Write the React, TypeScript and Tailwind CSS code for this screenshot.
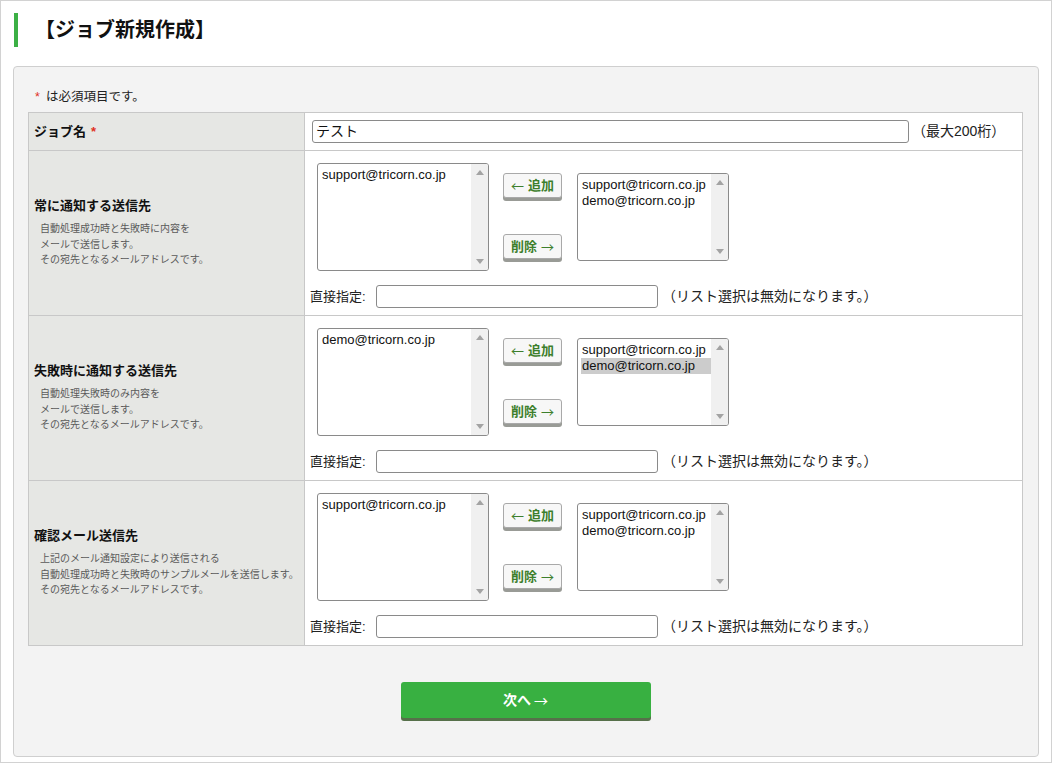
import React from 'react';

type Row = {
  title: string;
  desc: string[];
  left: string[];
  right: string[];
  selected?: number;
};

const ROWS: Row[] = [
  {
    title: '常に通知する送信先',
    desc: ['自動処理成功時と失敗時に内容を', 'メールで送信します。', 'その宛先となるメールアドレスです。'],
    left: ['support@tricorn.co.jp'],
    right: ['support@tricorn.co.jp', 'demo@tricorn.co.jp'],
  },
  {
    title: '失敗時に通知する送信先',
    desc: ['自動処理失敗時のみ内容を', 'メールで送信します。', 'その宛先となるメールアドレスです。'],
    left: ['demo@tricorn.co.jp'],
    right: ['support@tricorn.co.jp', 'demo@tricorn.co.jp'],
    selected: 1,
  },
  {
    title: '確認メール送信先',
    desc: [
      '上記のメール通知設定により送信される',
      '自動処理成功時と失敗時のサンプルメールを送信します。',
      'その宛先となるメールアドレスです。',
    ],
    left: ['support@tricorn.co.jp'],
    right: ['support@tricorn.co.jp', 'demo@tricorn.co.jp'],
  },
];

const ARROW = "font-['Noto_Sans_CJK_JP',sans-serif] font-normal";

function ListBox({ items, selected, className }: { items: string[]; selected?: number; className: string }) {
  return (
    <div className={`flex overflow-hidden rounded-[3px] border border-[#8a8a8a] bg-white ${className}`}>
      <div className="flex-1 pl-[3px] pt-[3px] text-[13px] leading-[16px] text-[#111]">
        {items.map((it, i) => (
          <div key={it} className={i === selected ? 'bg-[#cccccc] pl-px' : 'pl-px'}>
            {it}
          </div>
        ))}
      </div>
      <div className="flex w-[17px] flex-col items-center justify-between bg-[#f0f0f0] py-[6px]">
        <svg width="8" height="5" viewBox="0 0 8 5">
          <path d="M0 5 L4 0 L8 5 Z" fill="#a3a3a3" />
        </svg>
        <svg width="8" height="5" viewBox="0 0 8 5">
          <path d="M0 0 L4 5 L8 0 Z" fill="#a3a3a3" />
        </svg>
      </div>
    </div>
  );
}

function MoveButton({ dir }: { dir: 'add' | 'del' }) {
  return (
    <button className="flex h-[25px] w-[59px] items-center justify-center rounded-[3px] border border-[#a9a9a9] bg-[#f7f7f7] text-[13px] font-bold leading-none text-[#3d7f2c] shadow-[0_3px_0_#999b96]">
      {dir === 'add' ? (
        <>
          <span className={ARROW}>←</span>
          <span className="ml-[4px]">追加</span>
        </>
      ) : (
        <>
          <span>削除</span>
          <span className={`ml-[4px] ${ARROW}`}>→</span>
        </>
      )}
    </button>
  );
}

export default function App() {
  return (
    <div className="h-[763px] w-[1052px] border border-[#d2d2d2] bg-white font-['Liberation_Sans','Noto_Sans_CJK_JP',sans-serif] text-[#111]">
      <div className="ml-[13px] mt-[12px] flex h-[34px] items-center border-l-4 border-[#3cb045] pl-[17px] text-[20px] font-bold leading-none">
        【ジョブ新規作成】
      </div>

      <div className="mx-[12px] mt-[19px] h-[691px] rounded-[4px] border border-[#cfcfcf] bg-[#f3f3f3] px-[14px] pt-[22px]">
        <div className="mb-[7px] flex h-[16px] items-center pl-[7px] text-[12.5px] leading-none text-[#222]">
          <span className="mr-[6px] text-[#e0321e]">*</span>は必須項目です。
        </div>

        <div className="grid w-[995px] grid-cols-[276px_718px] border-l border-t border-[#c8c8c8]">
          <div className="flex h-[38px] items-center border-b border-r border-[#c8c8c8] bg-[#e6e7e4] pl-[5px] text-[13px] font-bold">
            ジョブ名<span className="ml-[5px] text-[#e0321e]">*</span>
          </div>
          <div className="flex h-[38px] items-center border-b border-r border-[#c8c8c8] bg-white pl-[7px] text-[13px]">
            <div className="flex h-[23px] w-[597px] items-center rounded-[3px] border border-[#8a8a8a] bg-white px-[3px] text-[14px]">
              テスト
            </div>
            <span className="ml-[3px] text-[14px] text-[#222]">（最大200桁）</span>
          </div>

          {ROWS.map((r) => (
            <React.Fragment key={r.title}>
              <div className="flex h-[165px] flex-col justify-center border-b border-r border-[#c8c8c8] bg-[#e6e7e4] pl-[5px]">
                <div className="mb-[7px] text-[13px] font-bold leading-[16px]">{r.title}</div>
                {r.desc.map((d) => (
                  <div key={d} className="pl-[6px] text-[10px] leading-[15.5px] text-[#5a5a5a]">
                    {d}
                  </div>
                ))}
              </div>
              <div className="h-[165px] border-b border-r border-[#c8c8c8] bg-white">
                <div className="ml-[12px] mt-[12px] flex h-[108px] items-start">
                  <ListBox items={r.left} className="h-[108px] w-[172px]" />
                  <div className="ml-[14px] mt-[10px] flex flex-col gap-[36px]">
                    <MoveButton dir="add" />
                    <MoveButton dir="del" />
                  </div>
                  <ListBox items={r.right} selected={r.selected} className="ml-[15px] mt-[10px] h-[88px] w-[152px]" />
                </div>
                <div className="ml-[5px] mt-[14px] flex h-[23px] items-center text-[13px]">
                  <span className="w-[66px] text-[#222]">直接指定:</span>
                  <div className="h-[23px] w-[282px] rounded-[3px] border border-[#8a8a8a] bg-white" />
                  <span className="ml-[4px] text-[14px] text-[#222]">（リスト選択は無効になります。）</span>
                </div>
              </div>
            </React.Fragment>
          ))}
        </div>

        <div className="mt-[36px] flex justify-center">
          <button className="ml-[-1px] flex h-[36px] w-[250px] items-center justify-center rounded-[3px] bg-[#38b041] text-[14px] font-bold text-white shadow-[0_3px_0_#56704a]">
            次へ<span className={`ml-[3px] ${ARROW}`}>→</span>
          </button>
        </div>
      </div>
    </div>
  );
}
